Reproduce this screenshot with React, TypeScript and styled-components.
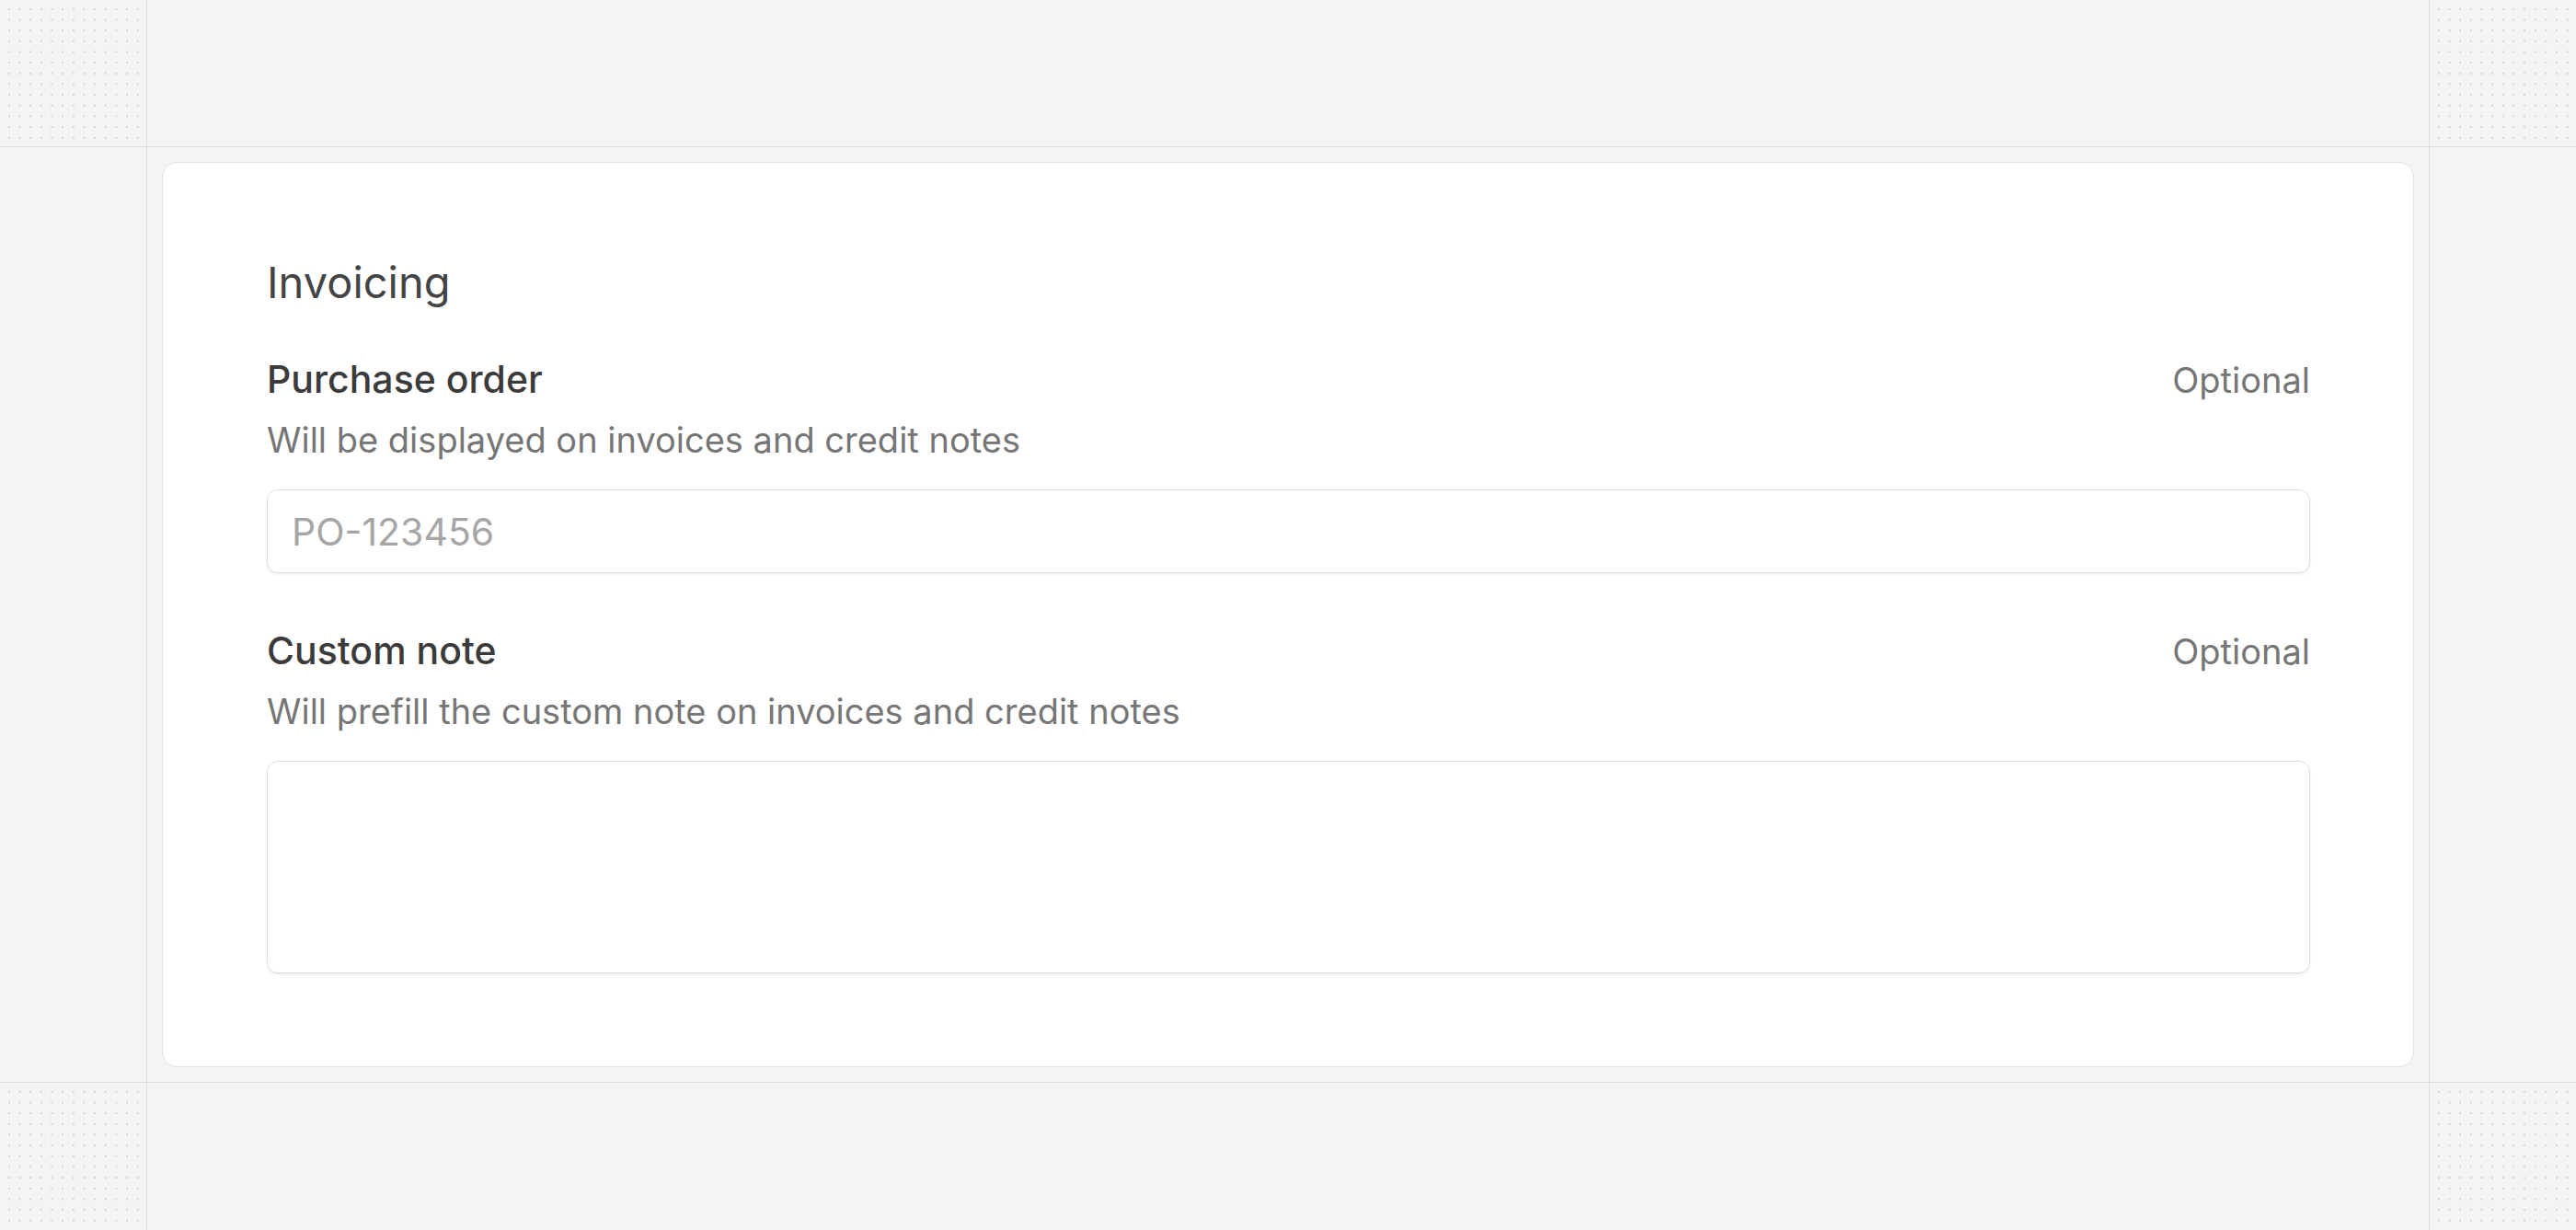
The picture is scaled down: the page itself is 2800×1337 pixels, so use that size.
import styled, { createGlobalStyle } from "styled-components";

const GlobalStyle = createGlobalStyle`
  html, body {
    margin: 0;
    padding: 0;
    background: #f4f4f4;
  }
  body {
    font-family: Inter, "Noto Sans", "Liberation Sans", sans-serif;
    -webkit-font-smoothing: antialiased;
  }
  * {
    box-sizing: border-box;
  }
`;

type Field = {
  id: string;
  label: string;
  hint: string;
  placeholder?: string;
  multiline?: boolean;
};

const fields: Field[] = [
  {
    id: "purchaseOrder",
    label: "Purchase order",
    hint: "Will be displayed on invoices and credit notes",
    placeholder: "PO-123456",
  },
  {
    id: "customNote",
    label: "Custom note",
    hint: "Will prefill the custom note on invoices and credit notes",
    multiline: true,
  },
];

function App() {
  return (
    <>
      <GlobalStyle />
      <Frame>
        <Cell $dotted />
        <Cell />
        <Cell $dotted />
        <Cell />
        <Center>
          <Card>
            <Title>Invoicing</Title>
            {fields.map((field) => (
              <FieldBlock key={field.id}>
                <LabelRow>
                  <Label htmlFor={field.id}>{field.label}</Label>
                  <Optional>Optional</Optional>
                </LabelRow>
                <Hint>{field.hint}</Hint>
                {field.multiline ? (
                  <TextArea id={field.id} />
                ) : (
                  <TextInput
                    id={field.id}
                    type="text"
                    placeholder={field.placeholder}
                  />
                )}
              </FieldBlock>
            ))}
          </Card>
        </Center>
        <Cell />
        <Cell $dotted />
        <Cell />
        <Cell $dotted />
      </Frame>
    </>
  );
}

const Frame = styled.div`
  display: grid;
  grid-template-columns: 159px 1fr 159px;
  grid-template-rows: 159px 1fr 160px;
  gap: 1px;
  height: 100vh;
  background: #dcdcdc;
`;

const Cell = styled.div<{ $dotted?: boolean }>`
  background-color: #f4f4f4;
  ${({ $dotted }) =>
    $dotted &&
    `
    background-image: radial-gradient(circle, #d2d2d2 1.2px, transparent 1.5px);
    background-size: 11.67px 11.67px;
    background-position: 4px 4px;
  `}
`;

const Center = styled.div`
  background: #f4f4f4;
  padding: 16px;
  display: flex;
  flex-direction: column;
`;

const Card = styled.section`
  flex: 1;
  background: #ffffff;
  border: 1px solid #e3e3e3;
  border-radius: 16px;
  padding: 101px 112px 101px 113px;
  display: flex;
  flex-direction: column;
`;

const Title = styled.h2`
  margin: 0 0 52px;
  font-size: 47px;
  line-height: 58px;
  font-weight: 400;
  color: #444444;
`;

const FieldBlock = styled.div`
  display: flex;
  flex-direction: column;
  & + & {
    margin-top: 60px;
  }
`;

const LabelRow = styled.div`
  display: flex;
  justify-content: space-between;
  align-items: baseline;
  height: 48px;
`;

const Label = styled.label`
  font-size: 41px;
  line-height: 48px;
  font-weight: 500;
  color: #3b3b3b;
`;

const Optional = styled.span`
  font-size: 38px;
  line-height: 48px;
  color: #767676;
`;

const Hint = styled.p`
  margin: 19px 0 31px;
  font-size: 38px;
  line-height: 46px;
  color: #767676;
`;

const fieldBox = `
  width: 100%;
  background: #ffffff;
  border: 1px solid #dedede;
  border-radius: 12px;
  box-shadow: 0 2px 3px rgba(0, 0, 0, 0.06);
  font-family: Inter, "Noto Sans", "Liberation Sans", sans-serif;
  font-size: 41px;
  color: #3a3a3a;
  outline: none;
`;

const TextInput = styled.input`
  ${fieldBox}
  height: 91px;
  padding: 0 26px;
  &::placeholder {
    color: #a6a6a6;
  }
`;

const TextArea = styled.textarea`
  ${fieldBox}
  height: 231px;
  padding: 20px 26px;
  resize: none;
  display: block;
`;

export default App;
